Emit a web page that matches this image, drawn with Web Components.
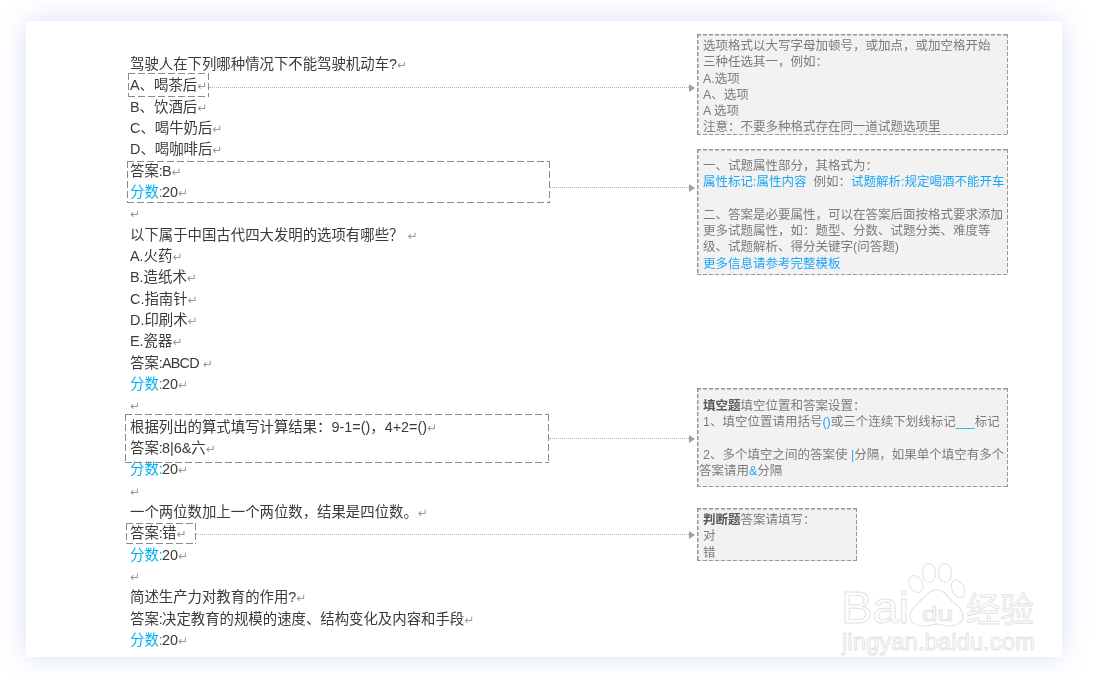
<!DOCTYPE html>
<html lang="zh">
<head>
<meta charset="utf-8">
<title>试题模板</title>
<style>
  html, body { margin: 0; height: 100%; background: #fff; overflow: hidden; }
  body { display: flex; padding: 21px 34px 23px 26px; box-sizing: border-box; font-family: "Liberation Sans", "Noto Sans CJK SC", sans-serif; }
  b.k { color: #00b0f0; font-weight: normal; }
  i.k { color: #1ea7f5; font-style: normal; }
  i.u { letter-spacing: -1px; margin-right: 1px; }
  strong { color: #595959; }
  .c { margin-right: -.8px; }
  .n { letter-spacing: -.8px; }
</style>
</head>
<body>
<paper-sheet>
  <doc-line>驾驶人在下列哪种情况下不能驾驶机动车?</doc-line>
  <doc-line>A、喝茶后</doc-line>
  <doc-line>B、饮酒后</doc-line>
  <doc-line>C、喝牛奶后</doc-line>
  <doc-line>D、喝咖啡后</doc-line>
  <doc-line>答案<span class="c">:</span>B</doc-line>
  <doc-line><b class="k">分数<span class="c">:</span></b>20</doc-line>
  <doc-line></doc-line>
  <doc-line>以下属于中国古代四大发明的选项有哪些？ </doc-line>
  <doc-line>A.火药</doc-line>
  <doc-line>B.造纸术</doc-line>
  <doc-line>C.指南针</doc-line>
  <doc-line>D.印刷术</doc-line>
  <doc-line>E.瓷器</doc-line>
  <doc-line>答案<span class="c">:</span><span class="n">ABCD</span> </doc-line>
  <doc-line><b class="k">分数<span class="c">:</span></b>20</doc-line>
  <doc-line></doc-line>
  <doc-line>根据列出的算式填写计算结果：9-1=()，4+2=()</doc-line>
  <doc-line>答案<span class="c">:</span>8|6&amp;六</doc-line>
  <doc-line><b class="k">分数<span class="c">:</span></b>20</doc-line>
  <doc-line></doc-line>
  <doc-line>一个两位数加上一个两位数，结果是四位数。</doc-line>
  <doc-line>答案<span class="c">:</span>错</doc-line>
  <doc-line><b class="k">分数<span class="c">:</span></b>20</doc-line>
  <doc-line></doc-line>
  <doc-line>简述生产力对教育的作用?</doc-line>
  <doc-line>答案<span class="c">:</span>决定教育的规模的速度、结构变化及内容和手段</doc-line>
  <doc-line><b class="k">分数<span class="c">:</span></b>20</doc-line>
  <doc-line></doc-line>

  <mark-box slot="over" style="--x:102px;--y:52px;--w:81px;--h:24px"></mark-box>
  <mark-box slot="over" style="--x:101px;--y:140px;--w:423px;--h:42px"></mark-box>
  <mark-box slot="over" style="--x:99px;--y:393px;--w:424px;--h:49px"></mark-box>
  <mark-box slot="over" style="--x:100px;--y:502px;--w:70px;--h:21px"></mark-box>

  <leader-line slot="over" style="--x:183px;--y:66px;--w:486px"></leader-line>
  <leader-line slot="over" style="--x:524px;--y:166px;--w:145px"></leader-line>
  <leader-line slot="over" style="--x:523px;--y:417px;--w:146px"></leader-line>
  <leader-line slot="over" style="--x:170px;--y:513px;--w:499px"></leader-line>

  <note-box slot="over" style="--x:671px;--y:13px;--w:311px;--h:101px;--top:4px">
    <div>选项格式以大写字母加顿号，或加点，或加空格开始</div>
    <div>三种任选其一，例如：</div>
    <div>A.选项</div>
    <div>A、选项</div>
    <div>A 选项</div>
    <div>注意：不要多种格式存在同一道试题选项里</div>
  </note-box>
  <note-box slot="over" style="--x:671px;--y:128px;--w:311px;--h:126px;--top:9px">
    <div>一、试题属性部分，其格式为：</div>
    <div><i class="k">属性标记:属性内容</i>&nbsp; 例如：<i class="k">试题解析:规定喝酒不能开车</i></div>
    <div>&nbsp;</div>
    <div>二、答案是必要属性，可以在答案后面按格式要求添加</div>
    <div>更多试题属性，如：题型、分数、试题分类、难度等</div>
    <div>级、试题解析、得分关键字(问答题)</div>
    <div><i class="k">更多信息请参考完整模板</i></div>
  </note-box>
  <note-box slot="over" style="--x:671px;--y:367px;--w:311px;--h:99px;--top:10px">
    <div><strong>填空题</strong>填空位置和答案设置：</div>
    <div>1、填空位置请用括号<i class="k">()</i>或三个连续下划线标记<i class="k u">___</i>标记</div>
    <div>&nbsp;</div>
    <div>2、多个填空之间的答案使 <i class="k">|</i>分隔，如果单个填空有多个</div>
    <div style="margin-left:-4px">答案请用<i class="k">&amp;</i>分隔</div>
  </note-box>
  <note-box slot="over" style="--x:671px;--y:487px;--w:160px;--h:53px;--top:4px">
    <div><strong>判断题</strong>答案请填写：</div>
    <div>对</div>
    <div>错</div>
  </note-box>

  <brand-mark slot="over"></brand-mark>
</paper-sheet>

<script>
"use strict";
class PaperSheet extends HTMLElement {
    constructor() {
        super();
        this.attachShadow({ mode: 'open' });
        this.shadowRoot.innerHTML = `
        <style>
        :host {
            display: block;
            flex: 1;
            position: relative;
            overflow: hidden;
            background: #fff;
            box-shadow: 0 0 26px rgba(96, 128, 224, .24);
        }
        .doc {
            display: flex;
            flex-direction: column;
            padding: 33px 0 0 104px;
            filter: blur(.4px);
        }
        </style>
        <div class="doc"><slot></slot></div>
        <slot name="over"></slot>`;
    }
}
customElements.define('paper-sheet', PaperSheet);

class DocLine extends HTMLElement {
    constructor() {
        super();
        this.attachShadow({ mode: 'open' });
        this.shadowRoot.innerHTML = `
        <style>
        :host {
            display: block;
            height: 21.33px;
            line-height: 21.33px;
            font-size: 14.4px;
            color: #3a3a3a;
            white-space: nowrap;
        }
        .ret { color: #999; font: 12px "DejaVu Sans", sans-serif; }
        </style>
        <slot></slot><span class="ret">↵</span>`;
    }
}
customElements.define('doc-line', DocLine);

class MarkBox extends HTMLElement {
    constructor() {
        super();
        this.attachShadow({ mode: 'open' });
        this.shadowRoot.innerHTML = `
        <style>
        :host {
            position: absolute;
            left: var(--x);
            top: var(--y);
            width: var(--w);
            height: var(--h);
            --h-dash: repeating-linear-gradient(90deg, #8a8a8a 0 7px, transparent 7px 10px);
            --v-dash: repeating-linear-gradient(180deg, #8a8a8a 0 7px, transparent 7px 10px);
            background:
                var(--h-dash) left top / 100% 1px no-repeat,
                var(--h-dash) left bottom / 100% 1px no-repeat,
                var(--v-dash) left top / 1px 100% no-repeat,
                var(--v-dash) right top / 1px 100% no-repeat;
        }
        </style>`;
    }
}
customElements.define('mark-box', MarkBox);

class LeaderLine extends HTMLElement {
    constructor() {
        super();
        this.attachShadow({ mode: 'open' });
        this.shadowRoot.innerHTML = `
        <style>
        :host {
            position: absolute;
            left: var(--x);
            top: var(--y);
            width: var(--w);
            height: 9px;
            margin-top: -4px;
            display: flex;
            align-items: center;
        }
        .rule { flex: 1; border-top: 1px dotted #b4b4b4; }
        .head {
            width: 0;
            height: 0;
            border-left: 6px solid #a0a0a0;
            border-top: 4px solid transparent;
            border-bottom: 4px solid transparent;
        }
        </style>
        <div class="rule"></div><div class="head"></div>`;
    }
}
customElements.define('leader-line', LeaderLine);

class NoteBox extends HTMLElement {
    constructor() {
        super();
        this.attachShadow({ mode: 'open' });
        this.shadowRoot.innerHTML = `
        <style>
        :host {
            position: absolute;
            left: var(--x);
            top: var(--y);
            width: var(--w);
            height: var(--h);
            box-sizing: border-box;
            padding: var(--top, 3px) 0 0 6px;
            background-color: #f2f2f2;
            --h-dash: repeating-linear-gradient(90deg, #979797 0 4px, transparent 4px 6px);
            --v-dash: repeating-linear-gradient(180deg, #979797 0 4px, transparent 4px 6px);
            background-image: var(--h-dash), var(--h-dash), var(--v-dash), var(--v-dash);
            background-size: 100% 1.5px, 100% 1.5px, 1.5px 100%, 1.5px 100%;
            background-position: left top, left bottom, left top, right top;
            background-repeat: no-repeat;
            font-size: 12.5px;
            line-height: 16.25px;
            color: #7c7c7c;
            white-space: nowrap;
        }
        .body { filter: blur(.4px); }
        </style>
        <div class="body"><slot></slot></div>`;
    }
}
customElements.define('note-box', NoteBox);

class BrandMark extends HTMLElement {
    constructor() {
        super();
        this.attachShadow({ mode: 'open' });
        this.shadowRoot.innerHTML = `
        <style>
        :host { position: absolute; right: 0; bottom: 0; width: 230px; height: 100px; }
        svg { display: block; }
        text { fill: #fff; stroke: #e2e2e2; stroke-width: .9; font-family: "Liberation Sans", "Noto Sans CJK SC", sans-serif; }
        .shape { fill: #fff; stroke: #e2e2e2; stroke-width: 1.1; }
        </style>
        <svg width="230" height="100" viewBox="832 557 230 100">
          <text x="841" y="623" font-size="44" textLength="68" lengthAdjust="spacingAndGlyphs">Bai</text>
          <ellipse class="shape" cx="916" cy="584" rx="6.5" ry="9" transform="rotate(-30 916 584)"/>
          <ellipse class="shape" cx="929" cy="573" rx="6.5" ry="9.5"/>
          <ellipse class="shape" cx="945" cy="573" rx="6.5" ry="9.5"/>
          <ellipse class="shape" cx="958" cy="589" rx="6" ry="9.5" transform="rotate(-25 958 589)"/>
          <path class="shape" d="M937 590c7 0 10 6 15 11 6 5 11 9 11 15 0 8-8 10-14 10-5 0-8-2-12-2s-8 2-13 2c-7 0-14-3-14-10 0-6 5-10 10-15 6-5 9-11 17-11z"/>
          <text x="922" y="621" font-size="21" textLength="31" lengthAdjust="spacingAndGlyphs">du</text>
          <text x="966" y="622" font-size="34" textLength="68" lengthAdjust="spacingAndGlyphs">经验</text>
          <text x="842" y="650" font-size="24" textLength="193" lengthAdjust="spacingAndGlyphs">jingyan.baidu.com</text>
        </svg>`;
    }
}
customElements.define('brand-mark', BrandMark);
</script>
</body>
</html>
